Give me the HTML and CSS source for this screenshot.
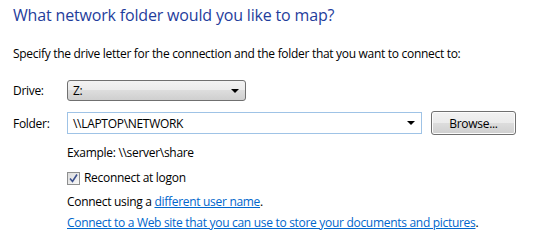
FILE: index.html
```html
<!DOCTYPE html>
<html lang="en">
<head>
  <meta charset="UTF-8">
  <title>Map Network Drive</title>
  <link rel="stylesheet" href="styles.css">
</head>
<body>
  <div class="page">
    <h1>What network folder would you like to map?</h1>
    <p class="intro">Specify the drive letter for the connection and the folder that you want to connect to:</p>

    <div class="row drive-row">
      <span class="label">Drive:</span>
      <div class="combo drive">
        <span>Z:</span>
        <span class="arrow"></span>
      </div>
    </div>

    <div class="row folder-row">
      <span class="label">Folder:</span>
      <div class="combo folder">
        <span>\\LAPTOP\NETWORK</span>
        <span class="arrow"></span>
      </div>
      <button class="browse">Browse...</button>
    </div>

    <div class="details">
      <p class="example">Example: \\server\share</p>
      <label class="check">
        <span class="box">
          <svg width="9" height="9" viewBox="0 0 9 9"><path d="M1 4.5 L3.5 7.5 L8 0.5" fill="none" stroke="#3b4f8c" stroke-width="1.6"/></svg>
        </span>
        Reconnect at logon
      </label>
      <p class="other">Connect using a <a href="#">different user name</a>.</p>
      <p class="web"><a href="#">Connect to a Web site that you can use to store your documents and pictures</a>.</p>
    </div>
  </div>
</body>
</html>
```

FILE: styles.css
```css
body {
  margin: 0;
  background: #fff;
  font-family: "Open Sans", "Noto Sans", sans-serif;
  font-size: 12px;
  letter-spacing: -0.3px;
  color: #000;
}

.page {
  padding: 4px 13px;
}

h1 {
  margin: 0;
  font-size: 16px;
  font-weight: normal;
  letter-spacing: -0.17px;
  color: #1f3d9c;
  line-height: 22px;
}

.intro {
  margin: 19px 0 0;
  line-height: 18px;
}

.row {
  display: flex;
  align-items: center;
}

.label {
  width: 54px;
}

.drive-row {
  margin-top: 17px;
}

.folder-row {
  margin-top: 10px;
}

.combo {
  box-sizing: border-box;
  display: flex;
  align-items: center;
  justify-content: space-between;
  padding: 0 5px 0 5px;
  height: 21px;
}

.combo.drive {
  width: 179px;
  border: 1px solid #707070;
  border-radius: 3px;
  background: linear-gradient(#f3f3f3, #ebebeb 50%, #dddddd 50%, #cfcfcf);
}

.combo.folder {
  width: 355px;
  height: 22px;
  border: 1px solid #9fc3e6;
  background: #fff;
}

.arrow {
  width: 0;
  height: 0;
  border-left: 4px solid transparent;
  border-right: 4px solid transparent;
  border-top: 4px solid #000;
  margin-right: 1px;
}

.browse {
  margin-left: 9px;
  width: 85px;
  height: 24px;
  font: inherit;
  letter-spacing: inherit;
  color: #000;
  border: 1px solid #707070;
  border-radius: 3px;
  background: linear-gradient(#f2f2f2, #ebebeb 50%, #dddddd 50%, #cfcfcf);
  box-shadow: inset 0 0 0 1px #fcfcfc;
  padding: 0;
}

.details {
  margin-left: 54px;
}

.details p {
  margin: 0;
  line-height: 18px;
}

.example {
  padding-top: 9px;
}

.check {
  display: flex;
  align-items: center;
  gap: 4px;
  margin-top: 7px;
  line-height: 18px;
}

.box {
  box-sizing: border-box;
  width: 13px;
  height: 13px;
  border: 1px solid #8e8f8f;
  background: linear-gradient(135deg, #dcdcdc, #f8f8f8);
  display: flex;
  align-items: center;
  justify-content: center;
}

.other {
  margin-top: 6px !important;
}

.web {
  margin-top: 3px !important;
}

a {
  color: #0066cc;
}
```
